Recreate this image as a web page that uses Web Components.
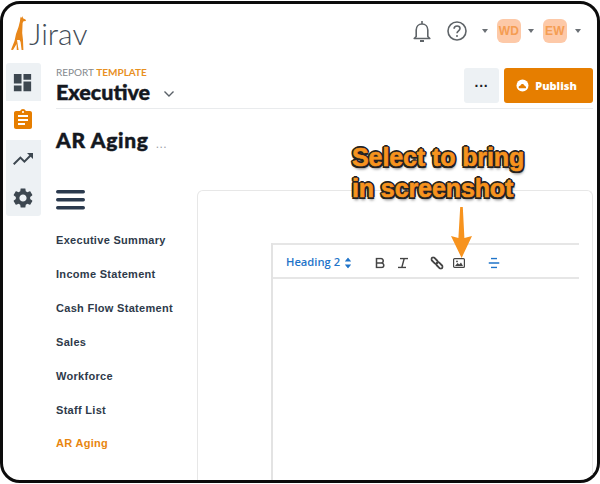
<!DOCTYPE html>
<html lang="en"><head><meta charset="utf-8"><title>Jirav report</title>
<style>html,body{margin:0;background:#fff}body{width:600px;height:484px;overflow:hidden;font-family:"Liberation Sans",Arial,sans-serif}</style>
</head><body>
<jv-frame>
  <jv-header></jv-header>
  <div slot="rail"><jv-rail></jv-rail></div>
  <jv-report-head slot="head"></jv-report-head>
  <jv-nav slot="nav">
    <jv-nav-item>Executive Summary</jv-nav-item>
    <jv-nav-item>Income Statement</jv-nav-item>
    <jv-nav-item>Cash Flow Statement</jv-nav-item>
    <jv-nav-item>Sales</jv-nav-item>
    <jv-nav-item>Workforce</jv-nav-item>
    <jv-nav-item>Staff List</jv-nav-item>
    <jv-nav-item active>AR Aging</jv-nav-item>
  </jv-nav>
  <jv-card slot="card"><jv-toolbar></jv-toolbar></jv-card>
  <jv-callout slot="over"></jv-callout>
</jv-frame>
<script>
function def(name, html){
  customElements.define(name, class extends HTMLElement{
    constructor(){super();this.attachShadow({mode:'open'}).innerHTML=html;}
  });
}
def('jv-frame',`<style>
:host{display:block;position:relative;box-sizing:border-box;width:600px;height:482px;margin-top:1px;border:3px solid #0c0c0c;border-radius:20px;overflow:hidden;background:#fff}
.body{display:flex;align-items:flex-start}
.rail{margin-left:3px;flex:none}
.main{margin-left:15px;margin-right:4px;flex:1;min-width:0}
.title{display:flex;align-items:baseline;height:81px;box-sizing:border-box;padding-top:19px;font:900 21px/24px Lato,sans-serif;-webkit-text-stroke:.45px #14181f;letter-spacing:.7px;color:#14181f}
.dots{margin-left:7px;font:400 12px/12px "Liberation Sans",sans-serif;color:#9aa0a6;letter-spacing:.5px;-webkit-text-stroke:0}
.row{display:flex;align-items:flex-start}
</style>
<slot></slot>
<div class="body">
  <div class="rail"><slot name="rail"></slot></div>
  <div class="main">
    <slot name="head"></slot>
    <div class="title">AR Aging<span class="dots">...</span></div>
    <div class="row"><slot name="nav"></slot><slot name="card"></slot></div>
  </div>
</div>
<slot name="over"></slot>`);
def('jv-header',`<style>
:host{display:flex;align-items:center;height:59px;padding-left:8px;box-sizing:border-box}
.logo{display:flex;align-items:center;gap:2px;font:300 30px/34px Lato,sans-serif;color:#434d57;margin-top:-2px}
.right{margin-left:auto;display:flex;align-items:center;margin-top:-5px;padding-right:16px}
svg{display:block}
.bell{margin-right:16px}.help{margin-right:15px}
.caret{width:0;height:0;border:3.5px solid transparent;border-top:4px solid #6b7075;border-bottom:0}
.av{width:24px;height:24px;border-radius:6px;background:#fdc9a8;color:#f59d52;font:700 12px/24px "Liberation Sans",sans-serif;text-align:center;letter-spacing:.3px}
.m1{margin:0 7px 0 9px}.m2{margin-left:9px}.m3{margin-left:8px}
</style>
<div class="logo">
<svg width="16" height="34" viewBox="0 0 16 34"><path fill="#e8871a" d="M9.5.5L10 2 11.5.3 12 2.2l2.5 1.2.5 1.6-2.5.2-.9 1.8-.4 10 .8 7 .4 10h-1.8l-1-8-1-2H6l1.6 10H5.8l-.2-6L2 34l-2-.2L3.5 25 5 18l2.5-7L9 5z"/></svg>
<span>Jirav</span></div>
<div class="right">
<svg class="bell" width="18" height="23" viewBox="0 0 18 23" fill="none" stroke="#5f6468" stroke-width="1.6"><path d="M3.2 16.5V10c0-3.4 2.3-6 5.8-6s5.8 2.6 5.8 6v6.5l2 2H1.2z" stroke-linejoin="round"/><path d="M9 1v3"/><path d="M7 21h4" stroke-width="1.8"/></svg>
<svg class="help" width="20" height="20" viewBox="0 0 20 20" fill="none" stroke="#5f6468"><circle cx="10" cy="10" r="9" stroke-width="1.6"/><path d="M7.1 7.8c0-1.7 1.3-2.8 3-2.8s2.9 1.1 2.9 2.5c0 2.3-3 2.3-3 4.7" stroke-width="1.6"/><circle cx="10" cy="15" r="1" fill="#5f6468" stroke="none"/></svg>
<span class="caret"></span><span class="av m1">WD</span><span class="caret"></span><span class="av m2">EW</span><span class="caret m3"></span>
</div>`);
def('jv-rail',`<style>
:host{display:block;width:35px;height:153px;background:#edf1f4;border-radius:3px;overflow:hidden}
.c{height:38.25px;display:flex;align-items:center;justify-content:center;padding-right:2px;box-sizing:border-box}
.a{background:#fff}svg{display:block}
</style>
<div class="c"><svg width="23" height="23" viewBox="0 0 24 24" fill="#3d4750"><path d="M3 13h8V3H3v10zm0 8h8v-6H3v6zm10 0h8V11h-8v10zm0-18v6h8V3h-8z"/></svg></div>
<div class="c a"><svg width="24" height="24" viewBox="0 0 24 24" fill="#e67e00"><path d="M19 3h-4.18C14.4 1.84 13.3 1 12 1c-1.3 0-2.4.84-2.82 2H5c-1.1 0-2 .9-2 2v14c0 1.1.9 2 2 2h14c1.1 0 2-.9 2-2V5c0-1.1-.9-2-2-2zm-7 0c.55 0 1 .45 1 1s-.45 1-1 1-1-.45-1-1 .45-1 1-1zm2 14H7v-2h7v2zm3-4H7v-2h10v2zm0-4H7V7h10v2z"/></svg></div>
<div class="c"><svg width="24" height="24" viewBox="0 0 24 24" fill="#3d4750"><path d="M16 6l2.29 2.29-4.88 4.88-4-4L2 16.59 3.41 18l6-6 4 4 6.3-6.29L22 12V6z"/></svg></div>
<div class="c" style="padding-top:2px"><svg width="24" height="24" viewBox="0 0 24 24" fill="#3d4750"><path d="M19.14 12.94c.04-.3.06-.61.06-.94 0-.32-.02-.64-.07-.94l2.03-1.58c.18-.14.23-.41.12-.61l-1.92-3.32c-.12-.22-.37-.29-.59-.22l-2.39.96c-.5-.38-1.03-.7-1.62-.94l-.36-2.54c-.04-.24-.24-.41-.48-.41h-3.84c-.24 0-.43.17-.47.41l-.36 2.54c-.59.24-1.13.57-1.62.94l-2.39-.96c-.22-.08-.47 0-.59.22L2.74 8.87c-.12.21-.08.47.12.61l2.03 1.58c-.05.3-.09.63-.09.94s.02.64.07.94l-2.03 1.58c-.18.14-.23.41-.12.61l1.92 3.32c.12.22.37.29.59.22l2.39-.96c.5.38 1.03.7 1.62.94l.36 2.54c.05.24.24.41.48.41h3.84c.24 0 .44-.17.47-.41l.36-2.54c.59-.24 1.13-.56 1.62-.94l2.39.96c.22.08.47 0 .59-.22l1.92-3.32c.12-.22.07-.47-.12-.61l-2.01-1.58zM12 15.6c-1.98 0-3.6-1.62-3.6-3.6s1.62-3.6 3.6-3.6 3.6 1.62 3.6 3.6-1.62 3.6-3.6 3.6z"/></svg></div>`);
def('jv-report-head',`<style>
:host{display:flex;justify-content:space-between;height:46px;box-sizing:border-box;border-bottom:1px solid #e9ebed}
.lbl{font:400 10px/12px Lato,sans-serif;color:#85898d;margin-top:3px}
.lbl b{color:#e8901f;font-weight:700}
.name{display:flex;align-items:center;font:900 21.5px/26px Lato,sans-serif;-webkit-text-stroke:.45px #14181f;color:#14181f;margin-top:1px}
svg{display:block;margin-left:13px;margin-top:3px}
.btns{display:flex;gap:5px;margin-top:5px}
.more{width:35px;height:35px;border-radius:3px;background:#edf1f4;color:#1c2026;font:700 14px/29px "Liberation Sans",sans-serif;text-align:center;letter-spacing:.8px}
.pub{width:89px;height:35px;border-radius:3px;background:#e67e00;color:#fff;font:800 11px/35px "Open Sans",sans-serif;display:flex;align-items:center;justify-content:center;gap:6px;padding-right:4px;box-sizing:border-box}
.pub svg{margin:0}
</style>
<div><div class="lbl">REPORT <b>TEMPLATE</b></div>
<div class="name">Executive<svg width="12" height="8" viewBox="0 0 12 8" fill="none" stroke="#5a6168" stroke-width="1.4"><path d="M1.5 1.5L6 6l4.5-4.5"/></svg></div></div>
<div class="btns"><div class="more">...</div><div class="pub"><svg width="13" height="13" viewBox="0 0 13 13"><circle cx="6.5" cy="6.5" r="6" fill="#fff"/><path fill="#e67e00" d="M3 9.2c-.9-1.3.1-2.6 1.3-2.4C4.8 5.4 6 4.7 7.2 5.2c.9.3 1.4 1 1.5 1.7 1-.1 1.8.9 1.2 2.3z"/></svg>Publish</div></div>`);
def('jv-nav',`<style>
:host{display:block;width:141px;flex:none}
.ham{display:block;margin-bottom:22px}
</style>
<svg class="ham" width="29" height="20" viewBox="0 0 29 20" fill="#2b3a4e"><rect y="0" width="29" height="3.4" rx="1.7"/><rect y="8" width="29" height="3.4" rx="1.7"/><rect y="16" width="29" height="3.4" rx="1.7"/></svg>
<slot></slot>`);
def('jv-nav-item',`<style>
:host{display:block;height:34px;font:700 11px/16px "Liberation Sans",sans-serif;color:#2e3a4a;letter-spacing:.3px;white-space:nowrap}
:host([active]){color:#e8860f;margin-top:-1px}
</style><slot></slot>`);
def('jv-card',`<style>
:host{display:block;flex:1;height:300px;box-sizing:border-box;border:1px solid #e7e7e7;border-bottom:0;border-radius:6px 6px 0 0;padding:52px 13px 0 73px}
.ed{height:300px;border-left:2px solid #e3e3e3}
</style><div class="ed"><slot></slot></div>`);
def('jv-toolbar',`<style>
:host{display:flex;align-items:center;height:36px;box-sizing:border-box;border-top:2px solid #e6e6e6;border-bottom:2px solid #e6e6e6;padding:2px 0 0 13px;position:relative}
.h{font:600 11.2px/14px "Open Sans","Liberation Sans",sans-serif;color:#1f74c9;white-space:nowrap}
.i{position:absolute;top:calc(50% + 1.5px);transform:translate(-50%,-50%);display:block}
</style>
<span class="h">Heading 2</span>
<svg class="i" style="left:75px" width="8" height="11" viewBox="0 0 8 11" fill="#1f74c9"><path d="M4 0l3.2 4H.8zM4 11L.8 7h6.4z"/></svg>
<svg class="i" style="left:107px" width="11" height="11" viewBox="0 0 11 11" fill="none" stroke="#444" stroke-width="1.5"><path d="M2 1h4.5a2.2 2.2 0 010 4.5H2zM2 5.5h5a2.3 2.3 0 010 4.6H2z"/></svg>
<svg class="i" style="left:130px" width="11" height="11" viewBox="0 0 11 11" fill="none" stroke="#444" stroke-width="1.4"><path d="M2.5 1h8M.5 10h8M6.7 1L4.3 10"/></svg>
<svg class="i" style="left:164px" width="13" height="13" viewBox="0 0 13 13" fill="none" stroke="#444" stroke-width="1.8"><rect x="-3.6" y="-1.8" width="7.2" height="3.6" rx="1.8" transform="translate(4 4) rotate(45)"/><rect x="-3.6" y="-1.8" width="7.2" height="3.6" rx="1.8" transform="translate(9 9) rotate(45)"/></svg>
<svg class="i" style="left:186px" width="12" height="10" viewBox="0 0 12 10"><rect x=".6" y=".6" width="10.8" height="8.8" rx="1" fill="none" stroke="#444" stroke-width="1.2"/><path fill="#444" d="M2 8l2.6-3 1.6 1.6L8 4.6 10 8z"/><circle cx="4" cy="3.4" r=".9" fill="#444"/></svg>
<svg class="i" style="left:221px" width="11" height="11" viewBox="0 0 11 11" fill="none" stroke="#1f74c9" stroke-width="1.5"><path d="M2.5 1h6M0 5.5h11M2.5 10h6"/></svg>`);
def('jv-callout',`<style>
:host{display:block;position:absolute;left:349px;top:138px;width:200px;height:120px;pointer-events:none}
.t{font:700 25px/31px "Liberation Sans",sans-serif;color:#f7931e;letter-spacing:-.1px;white-space:nowrap;
-webkit-text-stroke:.6px #f7931e;
text-shadow:-1.5px -1.5px 0 #222,1.5px -1.5px 0 #222,-1.5px 1.5px 0 #222,1.5px 1.5px 0 #222,0 2px 0 #222,0 -2px 0 #222,2px 0 0 #222,-2px 0 0 #222,1px 3px 3px rgba(0,0,0,.55)}
svg{position:absolute;left:98px;top:64px}
</style>
<div class="t">Select to bring<br>in screenshot</div>
<svg width="24" height="54" viewBox="0 0 24 54" fill="#f7931e"><path d="M10.2 1h2.6L14.4 32l7.6-2L11.6 52 1 30l7.4 2z"/></svg>`);
</script>
</body></html>
